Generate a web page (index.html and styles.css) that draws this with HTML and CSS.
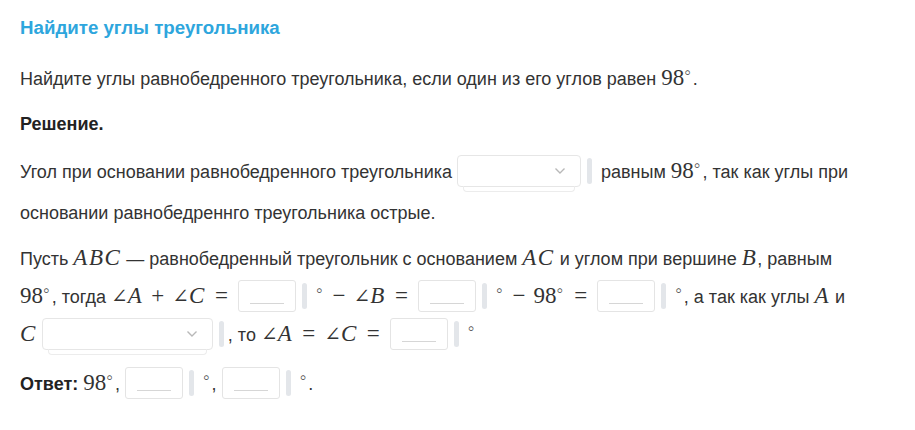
FILE: index.html
```html
<!DOCTYPE html>
<html lang="ru">
<head>
<meta charset="utf-8">
<link rel="stylesheet" href="styles.css">
</head>
<body>
<div class="task">
  <h2 class="title">Найдите углы треугольника</h2>
  <p class="p1">Найдите углы равнобедренного треугольника, если один из его углов равен <span class="m">98<sup>∘</sup></span>.</p>
  <p class="sol"><b>Решение.</b></p>
  <p class="p2">Угол при основании равнобедренного треугольника <span class="sel"><span class="chev"><svg width="12" height="8" viewBox="0 0 12 8"><path d="M1.5 1.5 L6 6 L10.5 1.5" fill="none" stroke="#b8b8b8" stroke-width="1.4"/></svg></span></span><span class="bar"></span> равным <span class="m">98<sup>∘</sup></span>, так как углы при основании равнобедреннго треугольника острые.</p>
  <p class="p3">Пусть <span class="m i">ABC</span> — равнобедренный треугольник с основанием <span class="m i">AC</span> и углом при вершине <span class="m i">B</span>, равным <span class="m">98<sup>∘</sup></span>, тогда <span class="m"><span class="ang">∠</span><i>A</i><span class="bin">+</span><span class="ang">∠</span><i>C</i><span class="rel">=</span></span><span class="inp"></span><span class="bar"></span> <span class="m"><sup>∘</sup><span class="bin">−</span><span class="ang">∠</span><i>B</i><span class="rel">=</span></span><span class="inp"></span><span class="bar"></span> <span class="m"><sup>∘</sup><span class="bin">−</span>98<sup>∘</sup><span class="rel">=</span></span><span class="inp"></span><span class="bar"></span> <span class="m"><sup>∘</sup></span>, а так как углы <span class="m i">A</span> и <span class="m i">C</span> <span class="sel wide"><span class="chev"><svg width="12" height="8" viewBox="0 0 12 8"><path d="M1.5 1.5 L6 6 L10.5 1.5" fill="none" stroke="#b8b8b8" stroke-width="1.4"/></svg></span></span><span class="bar"></span>, то <span class="m"><span class="ang">∠</span><i>A</i><span class="rel">=</span><span class="ang">∠</span><i>C</i><span class="rel">=</span></span><span class="inp"></span><span class="bar"></span> <span class="m"><sup>∘</sup></span></p>
  <p class="ans"><b>Ответ:</b> <span class="m">98<sup>∘</sup></span>, <span class="inp"></span><span class="bar"></span> <span class="m"><sup>∘</sup></span>, <span class="inp"></span><span class="bar"></span> <span class="m"><sup>∘</sup></span>.</p>
</div>
</body>
</html>
```

FILE: styles.css
```css
html, body {
  margin: 0;
  padding: 0;
  background: #ffffff;
}
body {
  font-family: "Liberation Sans", Arial, sans-serif;
  color: #333333;
  font-size: 18px;
}
.task {
  padding: 16px 60px 0 20px;
}
.title {
  margin: 0;
  font-size: 18.7px;
  line-height: 24px;
  font-weight: bold;
  color: #2ea6dd;
}
p {
  margin: 0;
}
.p1 {
  margin-top: 26px;
  line-height: 24px;
}
.sol {
  margin-top: 21px;
  line-height: 24px;
}
.sol b, .ans b {
  font-weight: bold;
  color: #222;
}
.p2 {
  margin-top: 16px;
  line-height: 41px;
}
.p3 {
  margin-top: 6px;
  line-height: 38px;
}
.ans {
  margin-top: 11px;
  line-height: 38px;
}
.m {
  font-family: "Liberation Serif", "DejaVu Serif", serif;
  font-size: 23px;
  line-height: 1;
  color: #333;
}
.m i, .m.i {
  font-style: italic;
  letter-spacing: 1.5px;
}
.m sup {
  font-family: "DejaVu Sans", sans-serif;
  font-size: 17px;
  font-weight: 300;
  vertical-align: 7px;
  line-height: 0;
  margin-left: -2px;
  margin-right: 0;
  color: #444;
}
.ang {
  font-family: "DejaVu Serif", serif;
  font-size: 20px;
  font-weight: normal;
}
.bin {
  margin: 0 8px;
}
.rel {
  margin: 0 9px;
}
.rel:last-child {
  margin-right: 10px;
}
.sel {
  display: inline-block;
  position: relative;
  width: 124px;
  height: 32px;
  box-sizing: border-box;
  border: 1px solid #e6e6e6;
  border-radius: 4px;
  vertical-align: middle;
  margin-top: -4px;
  background: #fff;
}
.sel.wide {
  width: 171px;
}
.sel::after {
  content: "";
  position: absolute;
  left: 5px;
  right: 5px;
  bottom: -6px;
  height: 5px;
  border: 1px solid #ececec;
  border-top: none;
  border-radius: 0 0 4px 4px;
}
.chev {
  position: absolute;
  right: 14px;
  top: 11px;
  line-height: 0;
}
.bar {
  display: inline-block;
  width: 5px;
  height: 26px;
  background: #e3e6ea;
  border-radius: 3px;
  margin-left: 6px;
  margin-right: 4px;
  vertical-align: middle;
  margin-top: -4px;
}
.inp {
  display: inline-block;
  position: relative;
  width: 58px;
  height: 32px;
  box-sizing: border-box;
  border: 1px solid #e4e4e4;
  border-radius: 3px;
  vertical-align: middle;
  margin-top: -4px;
  background: #fff;
}
.inp::after {
  content: "";
  position: absolute;
  left: 11px;
  right: 11px;
  bottom: 7px;
  height: 1px;
  background: #d6d6d6;
}
```
